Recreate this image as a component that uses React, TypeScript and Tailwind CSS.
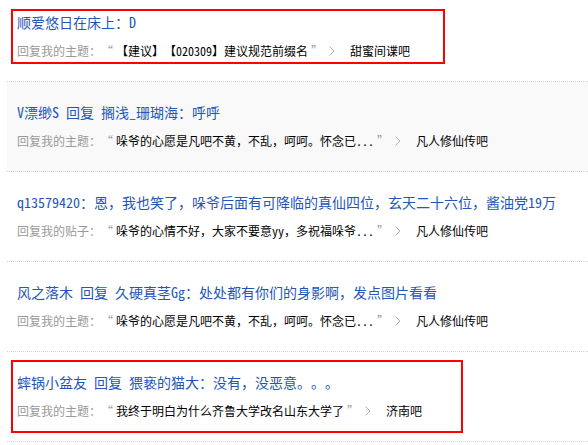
import React from 'react';

const font = { fontFamily: '"Noto Sans Mono CJK SC", "Noto Sans CJK SC", sans-serif' };

const items = [
    {
        title: '顺爱悠日在床上：D',
        label: '回复我的主题：',
        quote: '【建议】【020309】建议规范前缀名',
        forum: '甜蜜间谍吧',
    },
    {
        title: 'V漂缈S 回复 搁浅_珊瑚海：呼呼',
        label: '回复我的主题：',
        quote: '哚爷的心愿是凡吧不黄，不乱，呵呵。怀念已...',
        forum: '凡人修仙传吧',
        hover: true,
    },
    {
        title: 'q13579420：恩，我也笑了，哚爷后面有可降临的真仙四位，玄天二十六位，酱油党19万',
        label: '回复我的贴子：',
        quote: '哚爷的心情不好，大家不要意yy，多祝福哚爷...',
        forum: '凡人修仙传吧',
    },
    {
        title: '风之落木 回复 久硬真茎Gg：处处都有你们的身影啊，发点图片看看',
        label: '回复我的主题：',
        quote: '哚爷的心愿是凡吧不黄，不乱，呵呵。怀念已...',
        forum: '凡人修仙传吧',
    },
    {
        title: '蟀锅小盆友 回复 猥亵的猫大：没有，没恶意。。。',
        label: '回复我的主题：',
        quote: '我终于明白为什么齐鲁大学改名山东大学了',
        forum: '济南吧',
    },
];

const Chevron = () => (
    <svg width="6" height="10" viewBox="0 0 6 10" className="ml-[8px] shrink-0">
        <polyline points="0.5,0.5 5,5 0.5,9.5" fill="none" stroke="#b0b0b0" strokeWidth="1" />
    </svg>
);

const App = () => {
    return (
        <div className="relative w-[588px] h-[445px] overflow-hidden bg-white [text-spacing-trim:space-all]" style={font}>
            {/* reply list */}
            <ul className="mt-[-8px] ml-[7px]">
                {items.map((item, i) => (
                    <li
                        key={i}
                        className={`h-[90px] border-b border-dotted border-[#d4d4d4] pl-[10px] pt-[19px] ${item.hover ? 'bg-[#f9f9f9]' : ''}`}
                    >
                        <div className="h-[22px] leading-[22px] text-[14px] text-[#2356b8] whitespace-nowrap">
                            {item.title}
                        </div>
                        <div className="mt-[8px] h-[20px] flex items-center text-[12px] leading-[20px] whitespace-nowrap">
                            <span className="text-[#999999]">{item.label}</span>
                            <span className="inline-block w-[15px] text-left text-[#999999]">“</span>
                            <span className="text-black">{item.quote}</span>
                            <span className="inline-block w-[13px] pl-[3px] text-left text-[#999999]">”</span>
                            <Chevron />
                            <span className="ml-[15px] text-black">{item.forum}</span>
                        </div>
                    </li>
                ))}
            </ul>

            {/* highlight boxes */}
            <div className="absolute left-[11px] top-[9px] w-[434px] h-[55px] border-2 border-[#ff0000]"></div>
            <div className="absolute left-[11px] top-[360px] w-[452px] h-[73px] border-2 border-[#ff0000]"></div>
        </div>
    );
};

export default App;
